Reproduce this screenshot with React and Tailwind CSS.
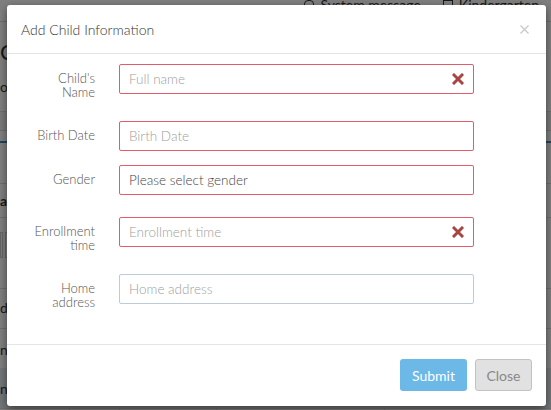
import React from 'react';

function RemoveIcon() {
  return (
    <svg width="12" height="12" viewBox="0 0 12 12" className="shrink-0">
      <path d="M2 2 L10 10 M10 2 L2 10" stroke="#a94442" strokeWidth="3" strokeLinecap="square" />
    </svg>
  );
}

function Field({ label, placeholder, value, error, clear, height }) {
  return (
    <div className="flex items-start" style={{ height }}>
      <label className="w-[88px] shrink-0 pt-[7px] text-right text-[13px] font-light leading-[14px] text-[#555]">
        {label}
      </label>
      <div
        className={
          'ml-[24px] flex h-[30px] w-[355px] items-center justify-between rounded-[2px] border px-[9px] text-[13.5px] font-light ' +
          (error ? 'border-[#e25d69]' : 'border-[#bccbd9]')
        }
      >
        <span className={value ? 'text-[#444]' : 'text-[#a0a0a0]'}>{value || placeholder}</span>
        {clear && <RemoveIcon />}
      </div>
    </div>
  );
}

function BackgroundPage() {
  return (
    <div className="flex h-full w-full flex-col bg-white text-[#333]">
      <div className="flex h-[10px] items-end justify-end gap-[22px] pr-[12px] text-[14px] leading-[10px]">
        <span className="flex items-center gap-[6px]">
          <span className="inline-block h-[10px] w-[10px] rounded-sm border border-[#333]" />
          System message
        </span>
        <span className="flex items-center gap-[6px]">
          <span className="inline-block h-[10px] w-[10px] border border-[#333]" />
          Kindergarten
        </span>
      </div>
      <div className="h-[12px] border-b border-[#ddd]" />
      <div className="pt-[18px] text-[22px] leading-[24px]">C</div>
      <div className="pt-[12px] text-[14px]">ol</div>
      <div className="mt-[14px] h-[20px] border-y border-[#ddd] bg-[#f3f3f3]" />
      <div className="mt-[10px] border-b-2 border-[#3c8dbc]" />
      <div className="mt-[40px] border-y border-[#ddd] py-[6px] text-[14px] font-bold">al</div>
      <div className="mt-[14px] flex gap-[2px]">
        <span className="h-[26px] w-[3px] border border-[#ccc]" />
        <span className="h-[26px] w-[6px] border border-[#ccc]" />
      </div>
      <div className="mt-[30px] border-t border-[#ddd] pt-[8px] text-[14px]">d</div>
      <div className="mt-[10px] border-t border-[#ddd] pt-[10px] text-[14px]">np</div>
      <div className="mt-[8px] h-[40px] bg-[#e4ecf3] pt-[10px] text-[14px]">np</div>
      <div className="flex flex-1 border-t border-[#ddd]">
        <div className="w-[70px] border-r border-[#ddd]" />
        <div className="w-[50px] border-r border-[#ddd]" />
        <div className="w-[97px] border-r border-[#ddd]" />
        <div className="w-[168px] border-r border-[#ddd]" />
      </div>
    </div>
  );
}

export default function App() {
  return (
    <div
      className="relative h-[410px] w-[551px] overflow-hidden"
      style={{ fontFamily: 'Lato, "Open Sans", "Liberation Sans", sans-serif' }}
    >
      <BackgroundPage />
      <div className="absolute inset-0 bg-black/50" />

      <div className="absolute left-[7px] top-[5px] flex h-[401px] w-[539px] flex-col rounded-[3px] bg-white shadow-[0_3px_9px_rgba(0,0,0,0.5)]">
        <div className="flex h-[49px] shrink-0 items-center justify-between border-b border-[#e5e5e5] pl-[14px] pr-[17px]">
          <h4 className="text-[14px] font-light text-[#333]">Add Child Information</h4>
          <svg width="9" height="9" viewBox="0 0 9 9">
            <path d="M0.5 0.5 L8.5 8.5 M8.5 0.5 L0.5 8.5" stroke="#c9c9c9" strokeWidth="1.3" />
          </svg>
        </div>

        <div className="flex flex-col pt-[10px] pb-[40px]">
          <Field label={<>Child's<br />Name</>} placeholder="Full name" error clear height="57px" />
          <Field label="Birth Date" placeholder="Birth Date" error height="44px" />
          <Field label="Gender" value="Please select gender" error height="52px" />
          <Field label={<>Enrollment<br />time</>} placeholder="Enrollment time" error clear height="57px" />
          <Field label={<>Home<br />address</>} placeholder="Home address" height="30px" />
        </div>

        <div className="flex flex-1 items-start justify-end gap-[8px] border-t border-[#e5e5e5] pr-[14px] pt-[14px]">
          <button className="h-[32px] w-[67px] rounded-[3px] bg-[#6cb8e7] text-[14px] text-white">Submit</button>
          <button className="h-[32px] w-[57px] rounded-[3px] border border-[#c2c2c2] bg-[#e1e1e1] text-[14px] text-[#888]">
            Close
          </button>
        </div>
      </div>
    </div>
  );
}
